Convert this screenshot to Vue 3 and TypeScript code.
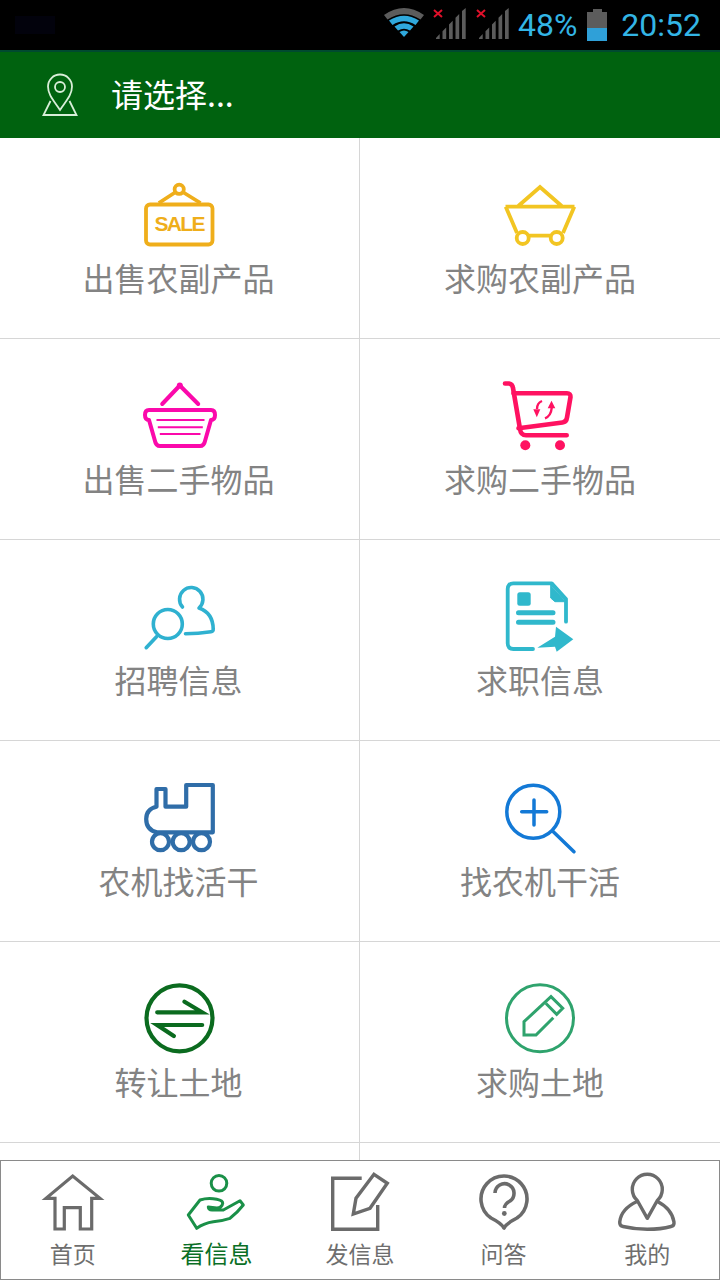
<script setup lang="ts">
import { ref } from 'vue'

const region = ref('请选择...')
const battery = ref(48)
const time = ref('20:52')
</script>

<template>
  <div class="screen">
    <div class="status-bar">
      <span class="st-ghost"></span>
      <svg class="st-wifi" width="44" height="36" viewBox="0 0 44 36">
        <path d="M3 11 Q23 -3 43 11 L39.5 15.5 Q23 5 6.5 15.5Z" fill="#5c5c5c" />
        <path d="M8 16.5 Q23 7 38 16.5 L34.5 21 Q23 13.5 11.5 21Z" fill="#2fa8dc" />
        <path d="M13.5 22.5 Q23 16 32.5 22.5 L29 26.5 Q23 23 17 26.5Z" fill="#2fa8dc" />
        <path d="M18.5 28 Q23 25 27.5 28 L23 33Z" fill="#2fa8dc" />
      </svg>
      <svg class="st-signal" width="34" height="32" viewBox="0 0 34 32">
        <path d="M2 2 L10 9 M10 2 L2 9" stroke="#e0102a" stroke-width="2" />
        <path d="M4 31 V30 L7.7 26.1 V31Z M10.5 31 V23.3 L14.2 19.5 V31Z M17 31 V16.5 L20.7 12.7 V31Z M23.5 31 V9.8 L27.2 6 V31Z M30 31 V3.1 L33.7 0 V31Z" fill="#5c5c5c" />
      </svg>
      <svg class="st-signal" width="34" height="32" viewBox="0 0 34 32">
        <path d="M2 2 L10 9 M10 2 L2 9" stroke="#e0102a" stroke-width="2" />
        <path d="M4 31 V30 L7.7 26.1 V31Z M10.5 31 V23.3 L14.2 19.5 V31Z M17 31 V16.5 L20.7 12.7 V31Z M23.5 31 V9.8 L27.2 6 V31Z M30 31 V3.1 L33.7 0 V31Z" fill="#5c5c5c" />
      </svg>
      <span class="st-text">{{ battery }}%</span>
      <svg class="st-battery" width="20" height="32" viewBox="0 0 20 32">
        <path d="M6 0 H15 V3 H20 V19 H0 V3 H6Z" fill="#5c5c5c" />
        <rect x="0" y="19" width="20" height="13" fill="#2fa0d8" />
      </svg>
      <span class="st-text">{{ time }}</span>
    </div>

    <header class="top-bar">
      <svg class="pin" width="40" height="48" viewBox="0 0 40 48" fill="none" stroke="#d8eed8" stroke-width="1.8">
        <path d="M20 39 C14 30 8 24 8 15.5 A12 12 0 0 1 32 15.5 C32 24 26 30 20 39Z" />
        <circle cx="20" cy="16" r="5" />
        <path d="M10.5 30 L3.5 44 H36.5 L29.5 30" />
      </svg>
      <span class="region">{{ region }}</span>
    </header>

    <main class="content">
      <div class="grid">
        <div class="cell">
          <svg class="icon" viewBox="0 0 80 72" fill="none" stroke="#efae1b" stroke-width="3.8">
            <rect x="6" y="24.5" width="66.5" height="40" rx="4" />
            <circle cx="39.2" cy="9.3" r="4.6" />
            <path d="M18.8 23 L35 12.5 M60.5 23 L43.5 12.5" />
            <text class="sale" x="39.2" y="51" text-anchor="middle">SALE</text>
          </svg>
          <span class="label">出售农副产品</span>
        </div>
        <div class="cell">
          <svg class="icon" viewBox="0 0 80 72" fill="none" stroke="#f2c522" stroke-width="3.8">
            <path d="M5.5 26.7 H74.5 M18.3 26 L40 7 L61.7 26 M5.7 26.7 L17 53 M74.3 26.7 L63 53 M28.7 55.7 H50.7" />
            <circle cx="22.7" cy="58" r="6" />
            <circle cx="56.7" cy="58" r="6" />
          </svg>
          <span class="label">求购农副产品</span>
        </div>

        <div class="cell">
          <svg class="icon" viewBox="0 0 80 72" fill="none" stroke="#fb09ab" stroke-width="4" stroke-linecap="round" stroke-linejoin="round">
            <path d="M22.2 23 L39.8 4.5 L58.2 23" />
            <circle cx="39.8" cy="4.5" r="3" fill="#fb09ab" stroke="none" />
            <path d="M9 39 Q5 39 5 34 Q5 29 9 29 H71 Q75 29 75 34 Q75 39 71 39 L65 60 Q64 65 60 65 H20 Q16 65 15 60Z" />
            <path d="M16.5 39 H64.5 M17.8 46.3 H62.8 M19.8 53 H60.5" stroke-width="2" stroke-linecap="butt" />
          </svg>
          <span class="label">出售二手物品</span>
        </div>
        <div class="cell">
          <svg class="icon" viewBox="0 0 80 72" fill="none" stroke="#ff1261" stroke-width="4.6" stroke-linecap="round" stroke-linejoin="round">
            <path d="M5 2.5 H9 Q12.5 3 13 7 L20 48 Q20.8 54.3 26 54.3 H66.7" />
            <path d="M13.5 12.3 H67 Q70.8 12.3 70.5 16 L67 36.5 Q66.5 41 62.5 41.5 L18.5 47.3" />
            <circle cx="25.3" cy="64.3" r="5" fill="#ff1261" stroke="none" />
            <circle cx="60" cy="64.3" r="5" fill="#ff1261" stroke="none" />
            <path d="M42 20 Q37 22 37 28 M51.7 27 Q51 35 45 37.3" stroke-width="2.4" stroke-linecap="butt" />
            <path d="M33.3 28.3 H40.3 L36.8 36.3Z M47.7 27.3 H55.3 L51.5 19.7Z" fill="#ff1261" stroke="none" />
          </svg>
          <span class="label">求购二手物品</span>
        </div>

        <div class="cell">
          <svg class="icon" viewBox="0 0 80 72" fill="none" stroke="#2fb1d0" stroke-width="3.6" stroke-linecap="round" stroke-linejoin="round">
            <circle cx="27.8" cy="42" r="14.5" />
            <path d="M16.5 54.7 L6.2 65.7" />
            <path d="M42.5 25 A11.7 11.7 0 1 1 59 26 Q73 31 73.2 47 Q73.5 49.5 71 49.7 Q58 51.5 45.5 51.7" />
          </svg>
          <span class="label">招聘信息</span>
        </div>
        <div class="cell">
          <svg class="icon" viewBox="0 0 80 72" fill="none" stroke="#30b8cc" stroke-width="3.8" stroke-linecap="round" stroke-linejoin="round">
            <path d="M33 67 H13.3 Q7.7 67 7.7 61.3 V7 Q7.7 1.3 13.3 1.3 H51.7 L66 17 V39.7" />
            <path d="M50.7 3 V16 L55 19.7 H66Z" fill="#30b8cc" stroke-width="1" />
            <rect x="17.3" y="10.3" width="13.4" height="13.4" rx="2.5" fill="#30b8cc" stroke="none" />
            <path d="M18.5 30.7 H53 M18.5 40.3 H53" stroke-width="5" />
            <path d="M37.3 65.7 L55 54.7 L56 44.7 L73.3 57.3 L56.7 69.7 L55 64.7Z" fill="#30b8cc" stroke="none" />
          </svg>
          <span class="label">求职信息</span>
        </div>

        <div class="cell">
          <svg class="icon" viewBox="0 0 80 72" fill="none" stroke="#2f6da8" stroke-width="4.2" stroke-linejoin="round">
            <path d="M46.2 2 H72.8 V49.3 H17 Q6.2 47 6.2 36 Q6.2 26 16.5 23.7 V6 H25.5 V23.7 H46.2Z" />
            <circle cx="20.5" cy="58.7" r="8.5" />
            <circle cx="41.2" cy="58.7" r="8.5" />
            <circle cx="61.5" cy="58.7" r="8.5" />
          </svg>
          <span class="label">农机找活干</span>
        </div>
        <div class="cell">
          <svg class="icon" viewBox="0 0 80 72" fill="none" stroke="#1379d6" stroke-width="3.5" stroke-linecap="round">
            <circle cx="33.3" cy="28.7" r="26.5" />
            <path d="M21.7 28.7 H46.7 M34 17 V42 M53.3 48.7 L74 68.7" />
          </svg>
          <span class="label">找农机干活</span>
        </div>

        <div class="cell">
          <svg class="icon" viewBox="0 0 80 72" fill="none" stroke="#0b6b1f" stroke-width="4.2" stroke-linecap="round">
            <circle cx="39.5" cy="34.3" r="33" />
            <path d="M17.2 28.3 H62.2 L44.5 17.7 M62.2 41 H17.2 L33.8 52" />
          </svg>
          <span class="label">转让土地</span>
        </div>
        <div class="cell">
          <svg class="icon" viewBox="0 0 80 72" fill="none" stroke="#2fa36d" stroke-width="3">
            <circle cx="40" cy="34.3" r="33.5" />
            <path d="M53.3 33.7 L36 51 H24 V37.7 L51 12.7 L62.7 24.3 L56.7 30.3 L46 19.5" />
          </svg>
          <span class="label">求购土地</span>
        </div>

        <div class="cell"></div>
        <div class="cell"></div>
      </div>
    </main>

    <nav class="tab-bar">
      <div class="tab">
        <svg class="tab-icon" viewBox="0 0 64 64" fill="none" stroke="#6b6b6b" stroke-width="3.2">
          <path d="M14 26.3 H5 L31.7 4 L59 26.3 H50.7 V57 H39.3 V35.7 H23.3 V57 H14Z" />
        </svg>
        <span class="tab-label">首页</span>
      </div>
      <div class="tab active">
        <svg class="tab-icon" viewBox="0 0 64 64" fill="none" stroke="#1a9048" stroke-width="3" stroke-linejoin="round">
          <circle cx="35" cy="11.3" r="7.8" />
          <path d="M4.3 43 L16 28 Q24 25.5 32.7 27.3 Q38.7 28.5 38.7 31.3 Q38 36 32.7 36 L24.3 35 Q24.5 38 28 38 H39.3 L56 28.7 L59.3 33 Q53 41 46 46.3 Q38 49 29.3 49.7 Q20 51 12.7 56.3Z" />
        </svg>
        <span class="tab-label">看信息</span>
      </div>
      <div class="tab">
        <svg class="tab-icon" viewBox="0 0 64 64" fill="none" stroke="#6b6b6b" stroke-width="3.4">
          <path d="M33.7 6.3 H4.7 V57.3 H49.7 V33" />
          <path d="M46 2.3 L59.3 11.3 L42 36.3 L25.3 42 L28 26.3Z" />
        </svg>
        <span class="tab-label">发信息</span>
      </div>
      <div class="tab">
        <svg class="tab-icon" viewBox="0 0 64 64" fill="none" stroke="#6b6b6b" stroke-width="3.6" stroke-linejoin="round">
          <path d="M32 56 C29 51 23 48 19 46 A23 23 0 1 1 45 46 C41 48 35 51 32 56Z" />
          <path d="M23 21 A9.5 9.5 0 1 1 38 29 Q32.5 32 32.5 36" />
          <circle cx="32.3" cy="41.5" r="2.4" fill="#6b6b6b" stroke="none" />
        </svg>
        <span class="tab-label">问答</span>
      </div>
      <div class="tab">
        <svg class="tab-icon" viewBox="0 0 64 64" fill="none" stroke="#6b6b6b" stroke-width="3.4" stroke-linejoin="round">
          <path d="M22.3 28.5 A15 15 0 1 1 42.3 28.5 L32.3 46.3Z" />
          <path d="M22 29.5 Q6 37 4.7 50 Q4.5 54 8 54.5 Q20 57.3 32.3 57.3 Q46 57.3 56 54.5 Q59.5 54 59 50 Q57 37 42.5 29.5" />
        </svg>
        <span class="tab-label">我的</span>
      </div>
    </nav>
  </div>
</template>

<style scoped>
.screen {
  width: 720px;
  height: 1280px;
  display: flex;
  flex-direction: column;
  overflow: hidden;
  background: #fff;
  font-family: "Noto Sans CJK SC", "Noto Sans", sans-serif;
}

/* --- Status bar --- */
.status-bar {
  height: 50px;
  flex: none;
  background: #000;
  display: flex;
  align-items: center;
  padding-right: 19px;
  box-sizing: border-box;
}

/* barely visible leftover notification in the corner */
.st-ghost {
  width: 40px;
  height: 18px;
  margin: 0 auto 0 15px;
  background: #02020c;
}

.st-wifi {
  margin-right: 7px;
  margin-top: -6px;
}

.st-signal {
  margin-right: 9px;
  margin-top: -2px;
}

.st-text {
  font-family: Roboto, sans-serif;
  font-size: 32px;
  line-height: 50px;
  color: #33b5e5;
}

.st-battery {
  margin: 0 14px 0 10px;
}

/* --- Top bar --- */
.top-bar {
  height: 88px;
  flex: none;
  background: #00620f;
  border-top: 2px solid #004a30;
  box-sizing: border-box;
  display: flex;
  align-items: center;
  padding-left: 40px;
  gap: 31px;
}

.pin {
  flex: none;
}

.region {
  color: #fff;
  font-size: 32px;
  line-height: 44px;
  margin-top: -4px;
}

/* --- Grid --- */
.content {
  flex: 1;
  min-height: 0;
  overflow: hidden;
}

.grid {
  display: grid;
  grid-template-columns: 360px 360px;
  grid-auto-rows: 201px;
}

.cell {
  box-sizing: border-box;
  border-bottom: 1px solid #d6d6d6;
  padding-top: 42px;
  display: flex;
  flex-direction: column;
  align-items: center;
}

.cell:nth-child(odd) {
  border-right: 1px solid #d6d6d6;
}

.cell:nth-child(odd) .label {
  margin-right: 2px;
}

.icon {
  width: 80px;
  height: 72px;
  flex: none;
  overflow: visible;
}

.sale {
  font-family: "Liberation Sans", Arial, sans-serif;
  font-size: 21px;
  font-weight: 700;
  letter-spacing: -1.6px;
  fill: #efae1b;
  stroke: none;
}

.label {
  margin-top: 5px;
  font-size: 32px;
  line-height: 40px;
  color: #838383;
}

/* --- Tab bar --- */
.tab-bar {
  height: 120px;
  flex: none;
  box-sizing: border-box;
  border: 1px solid #8a8a8a;
  background: #fff;
  display: grid;
  grid-template-columns: repeat(5, 1fr);
}

.tab {
  display: flex;
  flex-direction: column;
  align-items: center;
  padding-top: 11px;
}

.tab-icon {
  width: 64px;
  height: 64px;
  flex: none;
}

.tab-label {
  margin-top: 1px;
  font-size: 23px;
  line-height: 32px;
  color: #6e6e6e;
}

.tab.active .tab-label {
  color: #0a6f26;
  font-size: 24px;
}
</style>

<style>
html,
body {
  margin: 0;
  background: #fff;
}
</style>
